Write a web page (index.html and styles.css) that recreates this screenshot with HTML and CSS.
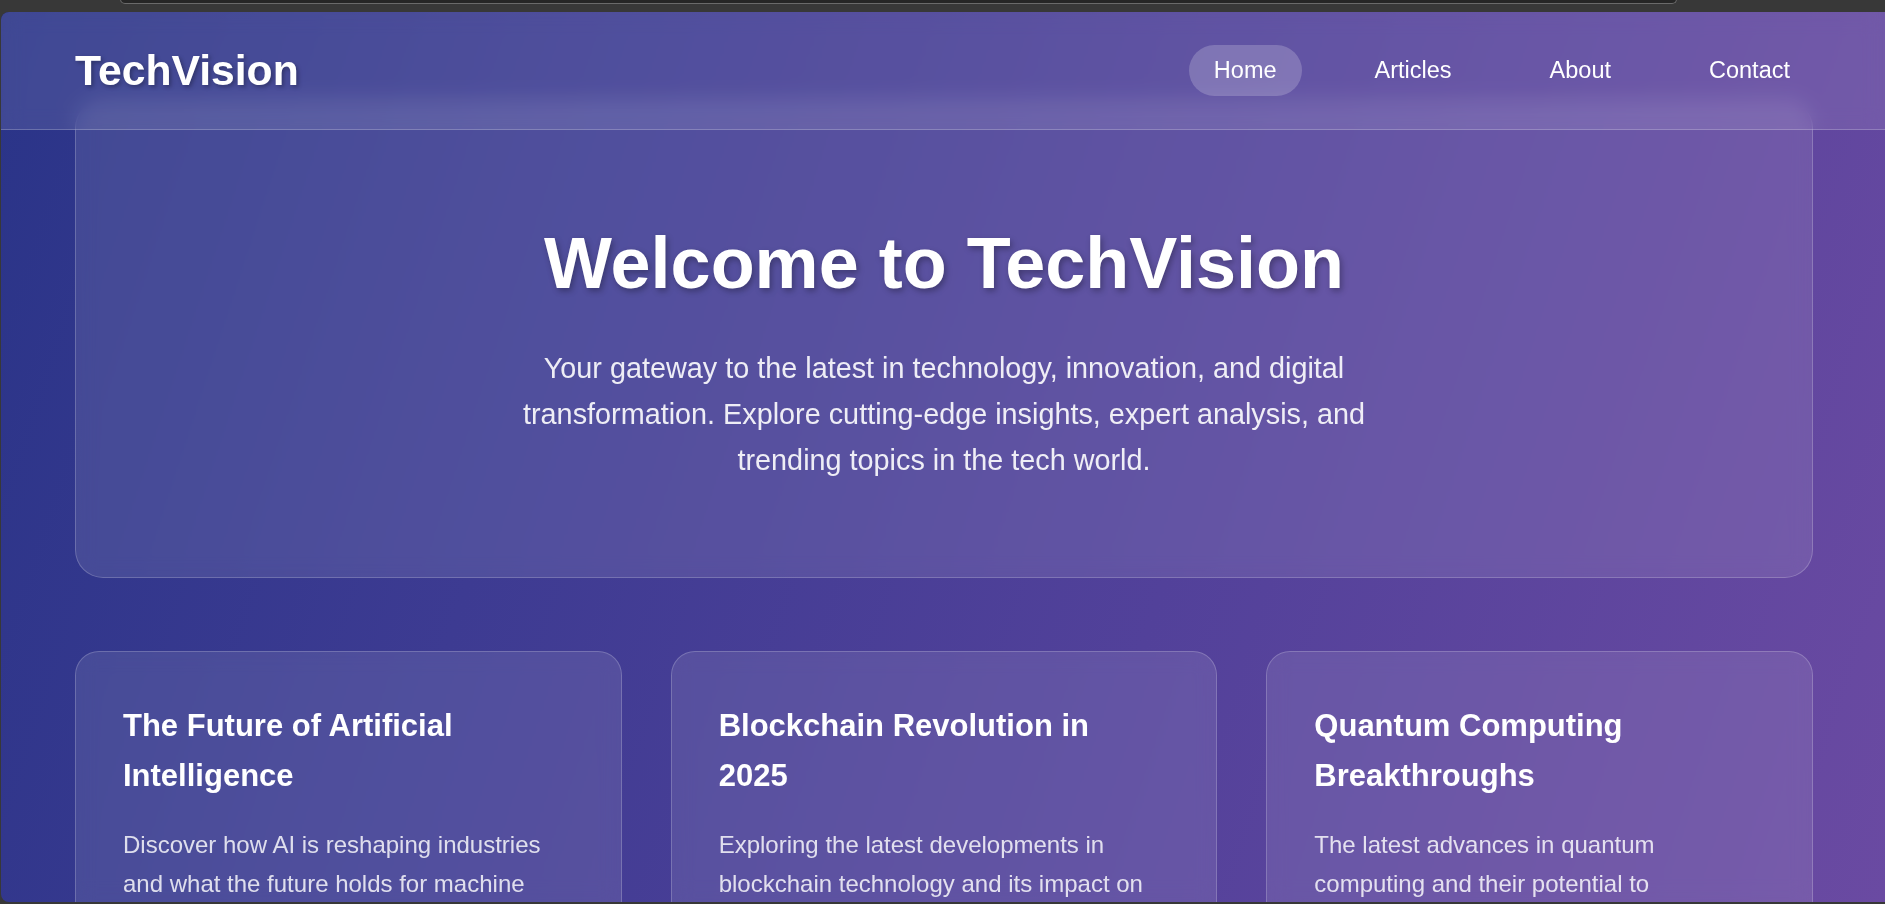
FILE: index.html
```html
<!DOCTYPE html>
<html lang="en">
<head>
<meta charset="utf-8">
<title>TechVision</title>
<link rel="stylesheet" href="styles.css">
</head>
<body>
<div class="chrome">
  <div class="chrome-bar"></div>
</div>
<div class="window">
  <header class="site-header">
    <div class="logo">TechVision</div>
    <nav class="nav">
      <a class="nav-link active" href="#">Home</a>
      <a class="nav-link" href="#">Articles</a>
      <a class="nav-link" href="#">About</a>
      <a class="nav-link" href="#">Contact</a>
    </nav>
  </header>
  <main class="main">
    <section class="hero">
      <h1 class="hero-title">Welcome to TechVision</h1>
      <p class="hero-text">Your gateway to the latest in technology, innovation, and digital transformation. Explore cutting-edge insights, expert analysis, and trending topics in the tech world.</p>
    </section>
    <section class="cards">
      <article class="card">
        <h3 class="card-title">The Future of Artificial Intelligence</h3>
        <p class="card-text">Discover how AI is reshaping industries and what the future holds for machine learning and automation.</p>
      </article>
      <article class="card">
        <h3 class="card-title">Blockchain Revolution in 2025</h3>
        <p class="card-text">Exploring the latest developments in blockchain technology and its impact on finance and beyond.</p>
      </article>
      <article class="card">
        <h3 class="card-title">Quantum Computing Breakthroughs</h3>
        <p class="card-text">The latest advances in quantum computing and their potential to transform how we solve problems.</p>
      </article>
    </section>
  </main>
</div>
</body>
</html>
```
FILE: styles.css
```css
* { box-sizing: border-box; }
html, body { margin: 0; padding: 0; }
body {
  background: #383838;
  font-family: "Liberation Sans", Arial, sans-serif;
  height: 904px;
  overflow: hidden;
}
.chrome {
  height: 12px;
  display: flex;
  padding-left: 120px;
}
.chrome-bar {
  width: 1557px;
  height: 5px;
  margin-top: -1px;
  background: #262626;
  border: 1px solid #6a6a6a;
  border-top: none;
  border-radius: 0 0 8px 8px;
}
.window {
  position: relative;
  margin-left: 1px;
  height: 890px;
  border-radius: 8px 0 0 8px;
  overflow: hidden;
  background: linear-gradient(108deg, #2a3488 0%, #3d3b92 30%, #52419a 62%, #6a4aa2 100%);
}
.site-header {
  position: absolute;
  top: 0; left: 0; right: 0;
  height: 118px;
  display: flex;
  align-items: center;
  justify-content: space-between;
  padding: 0 70px 0 74px;
  background: rgba(255,255,255,0.1);
  backdrop-filter: blur(10px);
  border-bottom: 1px solid rgba(255,255,255,0.22);
  z-index: 10;
}
.logo {
  color: #fff;
  font-size: 42.7px;
  font-weight: 700;
  text-shadow: 2px 2px 4px rgba(0,0,0,0.3);
}
.nav {
  display: flex;
  gap: 48px;
}
.nav-link {
  color: #fff;
  text-decoration: none;
  font-size: 23.5px;
  padding: 12px 25px;
  border-radius: 26px;
  line-height: 27px;
}
.nav-link.active {
  background: rgba(255,255,255,0.2);
}
.main {
  padding: 88px 72px 0 74px;
}
.hero {
  background: rgba(255,255,255,0.1);
  border: 1px solid rgba(255,255,255,0.2);
  border-radius: 28px;
  padding: 121px 40px 94px;
  text-align: center;
  backdrop-filter: blur(10px);
}
.hero-title {
  margin: 0 0 40px;
  color: #fff;
  font-size: 72px;
  font-weight: 700;
  line-height: 83px;
  text-shadow: 2px 3px 6px rgba(0,0,0,0.3);
}
.hero-text {
  margin: 0 auto;
  max-width: 900px;
  color: rgba(255,255,255,0.9);
  font-size: 28.8px;
  line-height: 1.6;
}
.cards {
  display: grid;
  grid-template-columns: repeat(3, 1fr);
  gap: 49px;
  margin-top: 73px;
}
.card {
  background: rgba(255,255,255,0.1);
  border: 1px solid rgba(255,255,255,0.2);
  border-radius: 24px;
  padding: 49px 56px 48px 47px;
  backdrop-filter: blur(10px);
}
.card-title {
  margin: 0 0 26px;
  color: #fff;
  font-size: 31px;
  font-weight: 700;
  line-height: 1.6;
}
.card-text {
  margin: 0;
  color: rgba(255,255,255,0.82);
  font-size: 24px;
  line-height: 1.6;
}
```
